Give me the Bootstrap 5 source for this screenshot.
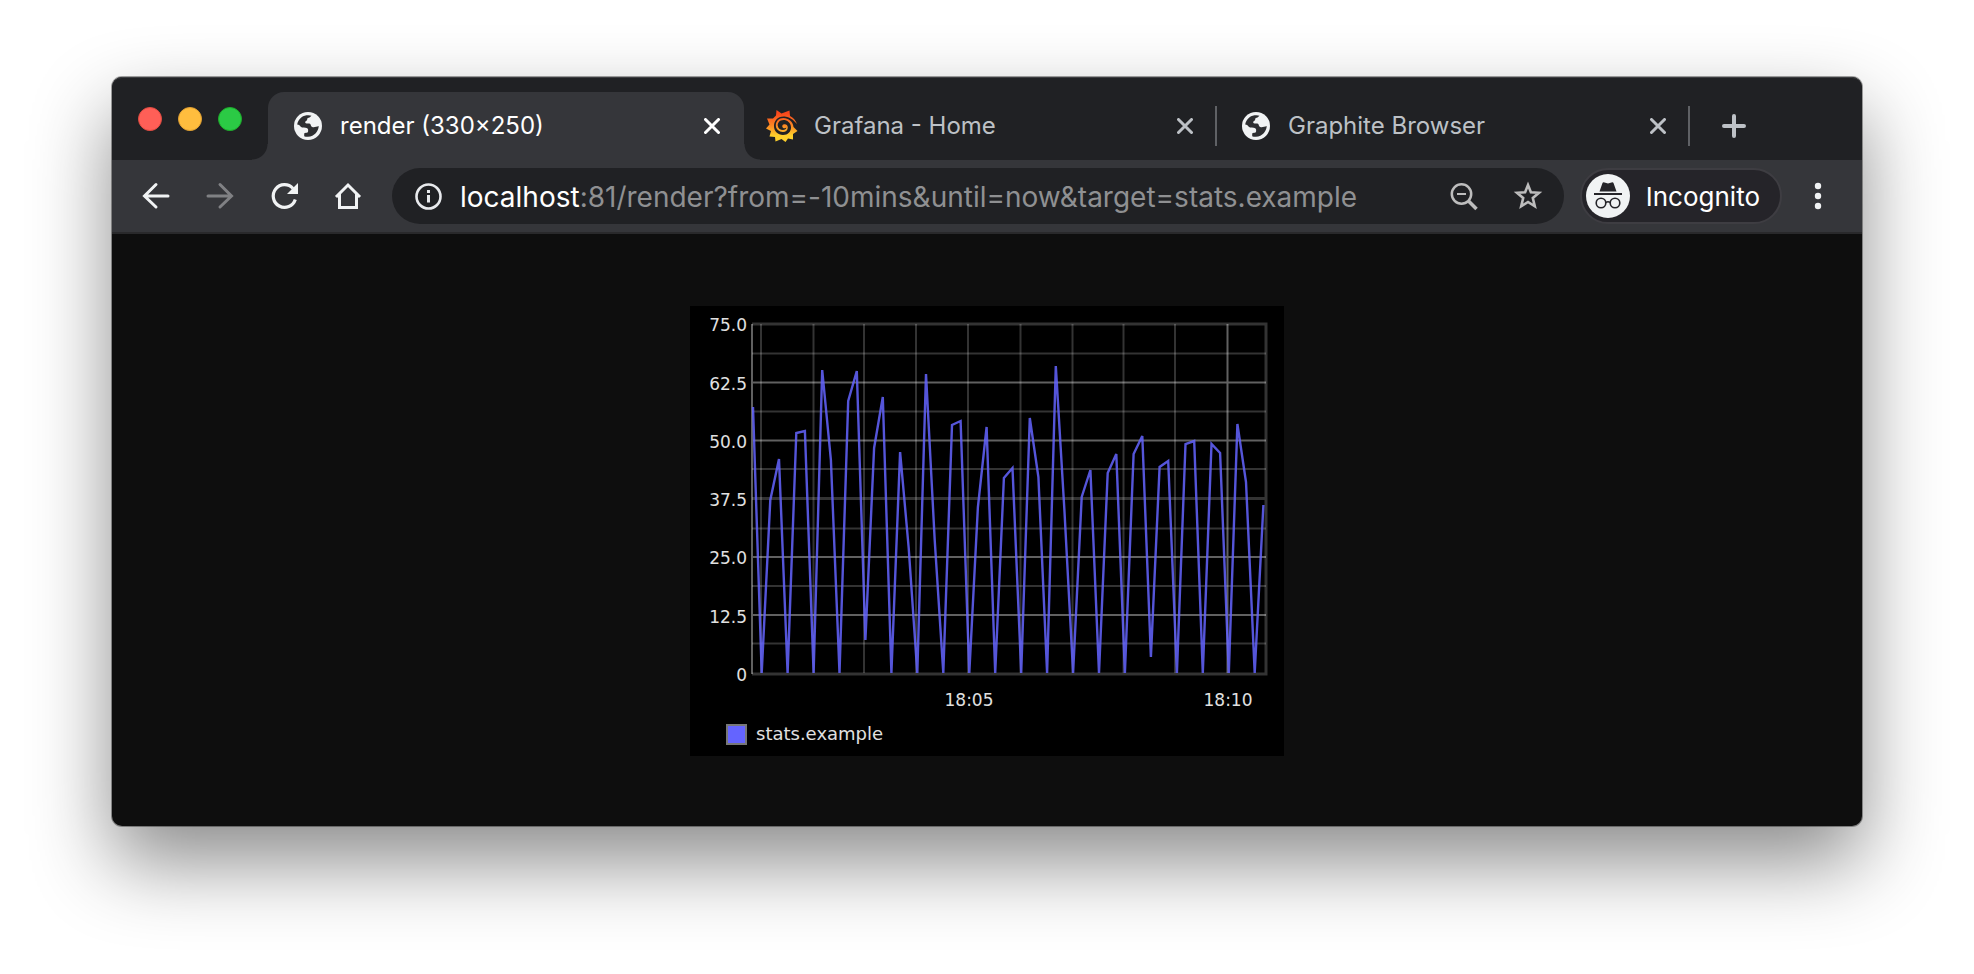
<!DOCTYPE html>
<html lang="en">
<head>
<meta charset="utf-8">
<meta name="viewport" content="width=device-width, initial-scale=1">
<title>render (330×250)</title>
<link href="https://cdn.jsdelivr.net/npm/bootstrap@5.3.0/dist/css/bootstrap.min.css" rel="stylesheet">
<style>
  body { background: #fff; font-family: Inter, Roboto, sans-serif; }
  .desk { padding: 77px 112px 148px; }
  .browser { background: #0e0e0e; border-radius: 10px; box-shadow: 0 0 0 1px rgba(0,0,0,.35), 0 36px 80px rgba(0,0,0,.46); }
  .strip { background: #202124; border-radius: 10px 10px 0 0; border-top: 1px solid #3c3d40; height: 83px; }
  .lights { flex: 0 0 156px; padding-left: 26px; gap: 16px; height: 82px; }
  .light { width: 24px; height: 24px; border-radius: 50%; border: 1px solid; padding: 0; }
  .red { background: #ff5f57; border-color: #e24b41; }
  .amber { background: #ffbd3e; border-color: #e1a032; }
  .green { background: #2bca45; border-color: #1dad2b; }
  .tabs { height: 68px; font-size: 24px; }
  .tab-item { flex: 1 1 39px; position: relative; padding: 0 0 0 25px; color: #bdc1c6; }
  .tab-item.on { flex-basis: 42px; background: #35363a; border-radius: 16px 16px 0 0; color: #fff; padding-left: 26px; }
  .tab-item.on::before, .tab-item.on::after { content: ""; position: absolute; bottom: 0; width: 16px; height: 16px; }
  .tab-item.on::before { right: 100%; background: radial-gradient(circle at 0 0, transparent 15px, #35363a 16px); }
  .tab-item.on::after { left: 100%; background: radial-gradient(circle at 100% 0, transparent 15px, #35363a 16px); }
  .tab-link { color: inherit; text-decoration: none; gap: 18px; min-width: 0; white-space: nowrap; line-height: 32px; }
  .tab-link.wide { gap: 16px; }
  .tab-item.snug { padding-left: 22px; }
  .plain { background: none; border: 0; padding: 0; color: inherit; display: flex; }
  .divider { width: 2px; height: 40px; background: #5f6165; margin-left: 22px; }
  .newtab { flex: 0 0 172px; padding-left: 31px; color: #bdc1c6; }
  .tools { background: #35363a; height: 74px; border-bottom: 2px solid #29292b; padding: 0 32px 0 28px; color: #f1f3f4; }
  .navs { gap: 32px; margin-right: 28px; }
  .omni { background: #202124; border-radius: 28px; height: 56px; padding: 0 20px 0 20px; gap: 16px; color: #e8eaed; }
  .omni .plain { color: #bdbdbd; }
  .url { height: 56px; font-size: 28px; line-height: 58px; white-space: nowrap; overflow: hidden; color: #8f9092; }
  .url b { font-weight: 400; color: #fff; }
  .pill { background: #252429; border: 2px solid #3e3d42; border-radius: 28px; height: 56px; padding: 0 20px 0 4px; gap: 16px; color: #fff; font-size: 26px; margin: 0 24px 0 16px; }
  .page { padding: 72px 16px 70px; }
  .graph { background: #000; max-width: 100%; height: auto; display: block; }
  .graph text { font-family: "DejaVu Sans", sans-serif; font-size: 17px; fill: #e0e0e0; }
  .graph .legend { font-size: 18px; }
  .minor { stroke: #fff; stroke-opacity: .2; stroke-width: 2; }
  .major { stroke: #fff; stroke-opacity: .38; stroke-width: 2; }
</style>
</head>
<body>
<svg width="0" height="0" class="position-absolute" aria-hidden="true">
  <symbol id="globe" viewBox="0 0 28 28"><circle cx="14" cy="14" r="14" fill="#f1f3f4"/><path fill="#2d2e31" d="M3.200 12.500C4 8 7.500 4 12.500 3.300C15 3 16.500 3.300 17.500 3.800L15.500 5.500C14.500 6.200 13 5.600 13.200 7.500C13 9.200 11 8.800 11.200 10.500C11.300 11.600 12.500 11.500 14.500 11.500C17 11.500 16.500 13 17.300 14.200C18.500 16 22 15 24.700 14C24.600 19 20.500 24.500 14 24.800C12.500 24.900 11 24.500 10.200 24.200V21.500C10.200 20.800 11.500 20.900 13 20.700C14.500 20.500 14.200 18 14 17.300C13.500 15.500 10.500 16 8.500 15.500C6 15 6.500 13 3.200 12.500Z"/></symbol>
  <symbol id="cross" viewBox="0 0 16 16"><path d="M1.500 1.500L14.500 14.500M14.500 1.500L1.500 14.500" stroke="currentColor" stroke-width="3" stroke-linecap="round"/></symbol>
</svg>
<main class="desk">
  <div class="browser">
    <header class="strip d-flex align-items-end">
      <div class="lights d-flex align-items-center">
        <button class="light red" aria-label="Close window"></button>
        <button class="light amber" aria-label="Minimise window"></button>
        <button class="light green" aria-label="Zoom window"></button>
      </div>
      <ul class="tabs d-flex flex-grow-1 list-unstyled mb-0">
        <li class="tab-item on d-flex align-items-center">
          <a href="#" class="tab-link d-flex align-items-center flex-grow-1"><svg width="28" height="28"><use href="#globe"/></svg>render (330×250)</a>
          <button class="plain me-4" aria-label="Close tab"><svg width="16" height="16"><use href="#cross"/></svg></button>
        </li>
        <li class="tab-item snug d-flex align-items-center">
          <a href="#" class="tab-link wide d-flex align-items-center flex-grow-1">
            <svg width="32" height="32" viewBox="0 0 32 32"><defs><linearGradient id="sun" x1="0" y1="0" x2="0" y2="1"><stop offset=".1" stop-color="#f9471c"/><stop offset=".5" stop-color="#fb8a24"/><stop offset=".8" stop-color="#fdd02b"/></linearGradient></defs>
              <path fill="url(#sun)" fill-rule="evenodd" d="M10.500 0L15.500 3.500L23.500 .5L24 6C27.500 7.500 29.500 10.500 31 14C28.500 11.500 26 8 20 6.800C12 5.500 8 11 8 16C8 21.500 12 25 17 25C22 25 25 21.500 25 17.500C25 12.500 21 10 17.500 10C13.500 10 11.500 13 11.700 15.500C12 18.500 14.500 20 17 20C19 20 20.300 18.800 20.300 17.500C19.500 18.500 17.800 18.600 17 17.800C15.800 16.800 16 14.500 18 14.200C20.500 13.800 22 15.700 21.800 17.700C21.600 20.500 19.500 22 17 22C13 22 9.800 19 9.800 15.500C9.800 11 13 8 17.300 8C22.500 8 27 11.500 27.500 17L31.500 21L27 24L27 29.500L22 28.500L19.500 32L15.500 29L9.500 31.500L9 27L3.500 26.500L5 21L0 18.500L3.500 14.500L1 8.500L7 8.500L10 5.500Z"/></svg>Grafana - Home</a>
          <button class="plain" aria-label="Close tab"><svg width="16" height="16"><use href="#cross"/></svg></button>
          <span class="divider"></span>
        </li>
        <li class="tab-item d-flex align-items-center">
          <a href="#" class="tab-link d-flex align-items-center flex-grow-1"><svg width="28" height="28"><use href="#globe"/></svg>Graphite Browser</a>
          <button class="plain" aria-label="Close tab"><svg width="16" height="16"><use href="#cross"/></svg></button>
          <span class="divider"></span>
        </li>
        <li class="newtab d-flex align-items-center">
          <button class="plain" aria-label="New tab"><svg width="26" height="26" viewBox="0 0 26 26"><path d="M13 3V23M3 13H23" stroke="currentColor" stroke-width="4" stroke-linecap="round"/></svg></button>
        </li>
      </ul>
    </header>
    <nav class="tools d-flex align-items-center" aria-label="Browser toolbar">
      <div class="navs d-flex">
        <button class="plain" aria-label="Back"><svg width="32" height="32" viewBox="0 0 32 32" fill="none" stroke="currentColor" stroke-width="3" stroke-linecap="round"><path d="M28 16H5M16 4.500L4.500 16L16 27"/></svg></button>
        <button class="plain" aria-label="Forward" disabled><svg width="32" height="32" viewBox="0 0 32 32" fill="none" stroke="#808184" stroke-width="3" stroke-linecap="round"><path d="M4 16H27M16 4.500L27.500 16L16 27"/></svg></button>
        <button class="plain" aria-label="Reload"><svg width="32" height="32" viewBox="0 0 32 32"><path d="M27.300 19.500A11.300 11.300 0 1 1 25 8.500" fill="none" stroke="currentColor" stroke-width="3.200"/><path d="M30 3V14H19Z" fill="currentColor"/></svg></button>
        <button class="plain" aria-label="Home"><svg width="32" height="32" viewBox="0 0 32 32" fill="none" stroke="currentColor" stroke-width="3"><path d="M4 17L16 5L28 17M7.500 14V27.500H24.500V14"/></svg></button>
      </div>
      <div class="omni d-flex align-items-center flex-grow-1">
        <svg width="32" height="32" viewBox="0 0 32 32" fill="none" stroke="currentColor"><circle cx="16.500" cy="16.500" r="12" stroke-width="2.600"/><path d="M16.500 15V22.500M16.500 10V13" stroke-width="3"/></svg>
        <div class="url flex-grow-1"><b>localhost</b>:81/render?from=-10mins&amp;until=now&amp;target=stats.example</div>
        <button class="plain me-3" aria-label="Zoom out"><svg width="32" height="32" viewBox="0 0 32 32" fill="none" stroke="currentColor"><circle cx="13.500" cy="14" r="9.700" stroke-width="2.500"/><path d="M20.500 21L28.500 29" stroke-width="3.500"/><path d="M9 14H18" stroke-width="2"/></svg></button>
        <button class="plain" aria-label="Bookmark"><svg width="32" height="32" viewBox="0 0 32 32" fill="none" stroke="currentColor" stroke-width="2.600"><path d="M16 5L18.900 12.200L27 12.800L20.800 18L22.800 26.300L16 22L9.200 26.300L11.200 18L5 12.800L13.100 12.200Z"/></svg></button>
      </div>
      <button class="pill d-flex align-items-center"><svg width="44" height="44" viewBox="0 0 44 44"><circle cx="22" cy="22" r="22" fill="#f1f3f4"/><g fill="#252429"><path d="M13.500 17.500L16.500 9Q17 8 18.500 8.500L22 9.500L25.500 8.500Q27 8 27.500 9L30.500 17.500Z"/><rect x="8" y="19" width="28" height="2"/></g><g fill="none" stroke="#252429" stroke-width="1.600"><circle cx="15" cy="29" r="4.800"/><circle cx="29" cy="29" r="4.800"/><path d="M20 28.500Q22 27 24 28.500"/></g></svg>Incognito</button>
      <button class="plain" aria-label="Menu"><svg width="24" height="32" viewBox="0 0 24 32" fill="currentColor"><circle cx="12" cy="6" r="3.200"/><circle cx="12" cy="16" r="3.200"/><circle cx="12" cy="26" r="3.200"/></svg></button>
    </nav>
    <section class="page d-flex justify-content-center">
      <svg class="graph" width="594" height="450" viewBox="0 0 594 450" role="img" aria-label="stats.example over the last ten minutes">
        <g class="minor" fill="none">
          <path d="M62 47.500H576M62 105.500H576M62 163H576M62 222.500H576M62 280H576M62 337.500H576"/>
          <path d="M71 18V367M123.500 18V367M174 18V367M226 18V367M278 18V367M330.500 18V367M382.500 18V367M433.500 18V367M485 18V367"/>
          <path d="M62 18H576V368H62M62 192.500H576" stroke-width="3"/>
        </g>
        <path class="major" d="M62 18V368M62 76.500H576M62 134.500H576M62 251H576M62 309H576M537.500 18V367"/>
        <polyline id="series" fill="none" stroke="#6464ff" stroke-opacity=".85" stroke-width="2.400"/>
        <g text-anchor="end">
          <text x="57" y="25">75.0</text><text x="57" y="84">62.5</text><text x="57" y="142">50.0</text><text x="57" y="200">37.5</text><text x="57" y="258">25.0</text><text x="57" y="317">12.5</text><text x="57" y="375">0</text>
        </g>
        <g text-anchor="middle"><text x="279" y="400">18:05</text><text x="538" y="400">18:10</text></g>
        <rect x="37" y="419" width="19" height="19" fill="#6464ff" stroke="#777" stroke-width="2"/>
        <text class="legend" x="66" y="434">stats.example</text>
      </svg>
    </section>
  </div>
</main>
<script>
  // Series heights above the zero line, one sample every ten seconds
  const heights = [266,0,173,214,0,240,242,0,303,213,0,272,302,33,225,276,0,221,125,0,299,133,0,248,252,0,166,246,0,195,205,0,255,196,0,307,163,0,176,203,0,200,219,0,219,237,16,206,212,0,229,232,0,229,220,0,249,191,0,168];
  document.getElementById('series').setAttribute('points', heights.map((h, i) => (63 + i * 8.65).toFixed(1) + ',' + (367 - h)).join(' '));
</script>
<script src="https://cdn.jsdelivr.net/npm/bootstrap@5.3.0/dist/js/bootstrap.bundle.min.js"></script>
</body>
</html>
